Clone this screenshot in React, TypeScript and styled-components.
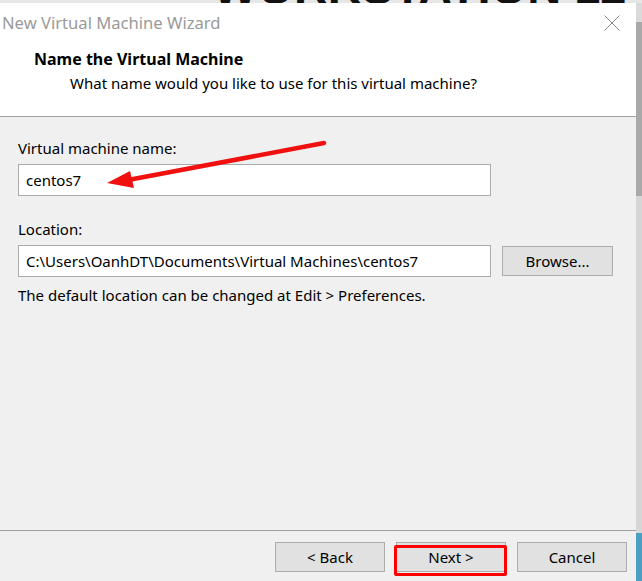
import React from "react";
import styled, { createGlobalStyle } from "styled-components";

const GlobalStyle = createGlobalStyle`
  html, body { margin: 0; padding: 0; }
  body {
    background: #dcdcdc;
    overflow: hidden;
    font-family: "Noto Sans", "Open Sans", "Liberation Sans", sans-serif;
  }
`;

const Page = styled.div`
  position: relative;
  width: 642px;
  height: 581px;
  overflow: hidden;
`;

const TopStrip = styled.div`
  position: relative;
  height: 3px;
  overflow: hidden;
  clip-path: inset(0);
  contain: paint;
  background: #e6e6e6;
`;

const Banner = styled.div`
  padding-left: 213px;
  transform: translateY(-36px);
  font-family: "Liberation Sans", sans-serif;
  font-weight: 700;
  font-size: 47px;
  line-height: 47px;
  height: 47px;
  color: #111;
  white-space: nowrap;
`;

const MainRow = styled.div`
  height: 578px;
  display: flex;
`;

const Dialog = styled.div`
  width: 636px;
  height: 578px;
  display: flex;
  flex-direction: column;
  background: #f0f0f0;
  overflow: hidden;
`;

const SideStrip = styled.div`
  flex: 1;
  display: flex;
  flex-direction: column;
`;

const SideSeg = styled.div<{ $h?: number; $c: string }>`
  ${(p) => (p.$h ? `height: ${p.$h}px;` : "flex: 1;")}
  background: ${(p) => p.$c};
`;

const Header = styled.div`
  flex-shrink: 0;
  box-sizing: border-box;
  background: #ffffff;
  border-bottom: 1px solid #a0a0a0;
  height: 114px;
  display: flex;
  flex-direction: column;
`;

const TitleBar = styled.div`
  height: 38px;
  display: flex;
  align-items: center;
  justify-content: space-between;
  padding-left: 2px;
  padding-right: 16px;
`;

const Title = styled.div`
  font-size: 16.6px;
  color: #9a9a9a;
`;

const CloseIcon = styled.svg`
  width: 16px;
  height: 16px;
  margin-top: 1px;
`;

const HeaderText = styled.div`
  padding-left: 34px;
  padding-top: 8px;
  display: flex;
  flex-direction: column;
  gap: 4px;
`;

const Heading = styled.div`
  font-weight: 700;
  font-size: 16px;
  line-height: 20px;
  color: #000;
`;

const SubHeading = styled.div`
  padding-left: 36px;
  font-size: 15px;
  line-height: 20px;
  color: #000;
`;

const Body = styled.div`
  flex: 1;
  min-height: 0;
  display: flex;
  flex-direction: column;
  padding: 21px 0 0 18px;
`;

const Label = styled.div<{ $mt?: number }>`
  font-size: 15px;
  line-height: 20px;
  color: #000;
  margin-top: ${(p) => p.$mt ?? 0}px;
`;

const FieldRow = styled.div`
  display: flex;
  align-items: center;
  gap: 11px;
  margin-top: 6px;
`;

const TextBox = styled.div`
  box-sizing: border-box;
  width: 473px;
  height: 32px;
  border: 1px solid #ababab;
  background: #fff;
  padding-left: 7px;
  display: flex;
  align-items: center;
  font-size: 15px;
  color: #000;
  white-space: nowrap;
`;

const Button = styled.div<{ $w?: number }>`
  box-sizing: border-box;
  width: ${(p) => p.$w ?? 110}px;
  height: 30px;
  border: 1px solid #adadad;
  background: #e1e1e1;
  display: flex;
  align-items: center;
  justify-content: center;
  font-size: 15px;
  color: #000;
`;

const Note = styled.div`
  margin-top: 8px;
  font-size: 15px;
  line-height: 20px;
  color: #000;
`;

const Footer = styled.div`
  flex-shrink: 0;
  box-sizing: border-box;
  height: 51px;
  border-top: 1px solid #a0a0a0;
  padding: 11px 9px 0 0;
  display: flex;
  justify-content: flex-end;
  align-items: flex-start;
  gap: 11px;
`;

const Highlighted = styled.div`
  position: relative;
  &::after {
    content: "";
    position: absolute;
    left: -2px;
    right: -1px;
    top: 3px;
    bottom: -4px;
    border: 3.5px solid #ff0000;
    border-radius: 2px;
    pointer-events: none;
  }
`;

const ArrowOverlay = styled.svg`
  position: absolute;
  left: 0;
  top: 0;
  width: 642px;
  height: 581px;
  pointer-events: none;
`;

export default function App() {
  return (
    <>
      <GlobalStyle />
      <Page>
        <TopStrip>
          <Banner>WORKSTATION 12</Banner>
        </TopStrip>
        <MainRow>
          <Dialog>
            <Header>
              <TitleBar>
                <Title>New Virtual Machine Wizard</Title>
                <CloseIcon viewBox="0 0 16 16">
                  <path d="M0.5 0.5 L15.5 15.5 M15.5 0.5 L0.5 15.5" stroke="#8a8a8a" strokeWidth="1" fill="none" />
                </CloseIcon>
              </TitleBar>
              <HeaderText>
                <Heading>Name the Virtual Machine</Heading>
                <SubHeading>What name would you like to use for this virtual machine?</SubHeading>
              </HeaderText>
            </Header>
            <Body>
              <Label>Virtual machine name:</Label>
              <FieldRow>
                <TextBox>centos7</TextBox>
              </FieldRow>
              <Label $mt={23}>Location:</Label>
              <FieldRow>
                <TextBox>C:\Users\OanhDT\Documents\Virtual Machines\centos7</TextBox>
                <Button $w={111}>Browse...</Button>
              </FieldRow>
              <Note>The default location can be changed at Edit &gt; Preferences.</Note>
            </Body>
            <Footer>
              <Button>&lt; Back</Button>
              <Highlighted>
                <Button>Next &gt;</Button>
              </Highlighted>
              <Button>Cancel</Button>
            </Footer>
          </Dialog>
          <SideStrip>
            <SideSeg $h={19} $c="#dadada" />
            <SideSeg $h={174} $c="#a9a9a9" />
            <SideSeg $c="#d6d6d6" />
            <SideSeg $h={48} $c="#4c9fc2" />
          </SideStrip>
        </MainRow>
        <ArrowOverlay viewBox="0 0 642 581">
          <line x1="324" y1="143" x2="128" y2="180" stroke="#f01010" strokeWidth="4.5" strokeLinecap="round" />
          <polygon points="107,183 130,171 134,188" fill="#f01010" />
        </ArrowOverlay>
      </Page>
    </>
  );
}
